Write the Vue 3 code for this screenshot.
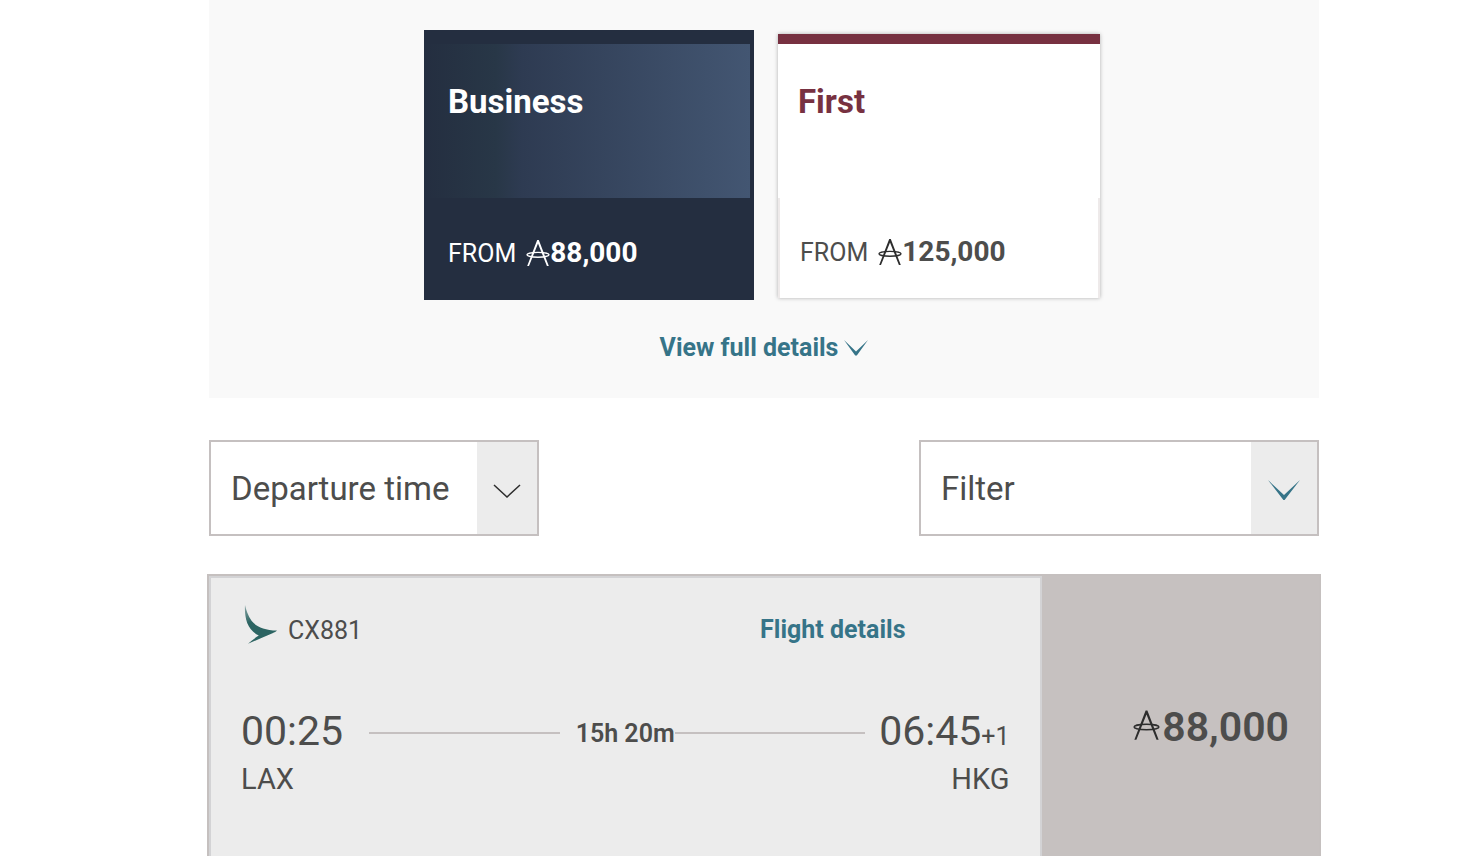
<script setup>
import { ref } from 'vue'

const cabin = ref('business')
const sort = ref('departure')

const cabins = [
  { id: 'business', name: 'Business', price: '88,000' },
  { id: 'first', name: 'First', price: '125,000' },
]
const flight = {
  number: 'CX881',
  departs: '00:25',
  origin: 'LAX',
  duration: '15h 20m',
  arrives: '06:45',
  dayOffset: '+1',
  destination: 'HKG',
  price: '88,000',
}
</script>

<template>
  <main class="page">
    <section class="fares">
      <div class="cards">
        <button
          v-for="c in cabins"
          :key="c.id"
          type="button"
          class="card"
          :class="c.id"
          :aria-pressed="cabin === c.id"
          @click="cabin = c.id"
        >
          <span class="card-head">{{ c.name }}</span>
          <span class="card-fare">
            <span class="from">FROM</span>
            <svg class="miles" viewBox="0 0 24 28" aria-hidden="true">
              <path class="legs" d="M1.2 27 L11.2 1 L12.8 1 L22.8 27 L20.9 27 L12 4.6 L3 27 Z" />
              <ellipse class="ring" cx="12" cy="15.8" rx="11" ry="2.4" />
            </svg>
            <strong class="amount">{{ c.price }}</strong>
          </span>
        </button>
      </div>
      <a href="#details" class="details">
        View full details
        <svg class="details-icon" viewBox="0 0 24 16" aria-hidden="true">
          <path d="M0 0 L12 11.6 L24 0 L12.8 15.6 L11.2 15.6 Z" />
        </svg>
      </a>
    </section>

    <section class="tools">
      <div class="sort">
        <select v-model="sort" class="sort-select" aria-label="Sort by">
          <option value="departure">Departure time</option>
          <option value="arrival">Arrival time</option>
        </select>
        <span class="sort-arrow">
          <svg viewBox="0 0 28 14" aria-hidden="true">
            <path d="M1 1 L14 13 L27 1" />
          </svg>
        </span>
      </div>
      <button type="button" class="filter">
        <span class="filter-label">Filter</span>
        <span class="filter-arrow">
          <svg viewBox="0 0 32 20" aria-hidden="true">
            <path d="M0 0 L16 15 L32 0 L16.6 20 L15.4 20 Z" />
          </svg>
        </span>
      </button>
    </section>

    <article class="flight">
      <div class="info">
        <header class="info-head">
          <span class="carrier">
            <svg class="wing" viewBox="0 0 34 40" aria-hidden="true">
              <defs>
                <linearGradient id="wing-fill" x1="0" y1="0" x2="0.35" y2="1">
                  <stop offset="0" stop-color="#2c6462" stop-opacity="0.5" />
                  <stop offset="0.45" stop-color="#2c6462" />
                </linearGradient>
              </defs>
              <path
                fill="url(#wing-fill)"
                d="M1 1 C2 6 4 11.5 7.7 17 C12 22.5 20 26.2 33 26.6 C32 27.7 30.5 28.5 28.5 29.2 C20 32.5 12 36.5 4 39.8 C7.5 36.5 11 34 14.8 31.6 C9.5 29 5.5 24.5 3.2 19 C1.2 13.5 .6 6.5 1 1 Z"
              />
            </svg>
            {{ flight.number }}
          </span>
          <a href="#flight" class="flight-link">Flight details</a>
        </header>
        <div class="route">
          <div class="stop">
            <span class="time">{{ flight.departs }}</span>
            <span class="airport">{{ flight.origin }}</span>
          </div>
          <div class="leg">
            <span class="line"></span>
            <span class="duration">{{ flight.duration }}</span>
            <span class="line"></span>
          </div>
          <div class="stop arrival">
            <span class="time">{{ flight.arrives }}<small class="offset">{{ flight.dayOffset }}</small></span>
            <span class="airport">{{ flight.destination }}</span>
          </div>
        </div>
      </div>
      <button type="button" class="price">
        <svg class="miles large" viewBox="0 0 24 28" aria-hidden="true">
          <path class="legs" d="M1.2 27 L11.2 1 L12.8 1 L22.8 27 L20.9 27 L12 4.6 L3 27 Z" />
          <ellipse class="ring" cx="12" cy="15.8" rx="11" ry="2.4" />
        </svg>
        <span>{{ flight.price }}</span>
      </button>
    </article>
  </main>
</template>

<style>
body {
  margin: 0;
  background: #fff;
}
</style>

<style scoped>
.page,
.page * {
  box-sizing: border-box;
}
.page {
  display: flex;
  flex-direction: column;
  min-height: 100vh;
  padding: 0 161px 0 209px;
  font-family: Roboto, Inter, "Liberation Sans", sans-serif;
  color: #4d4d4c;
}
button,
select {
  margin: 0;
  padding: 0;
  border: 0;
  border-radius: 0;
  font: inherit;
  color: inherit;
  background: none;
  text-align: left;
  cursor: pointer;
}
a {
  color: #367488;
  font-weight: 700;
  font-size: 25px;
  line-height: 32px;
  text-decoration: none;
}
svg {
  display: block;
  flex: none;
}
.fares {
  display: flex;
  flex-direction: column;
  align-items: center;
  padding: 30px 0 34px;
  background: #f9f9f9;
}
.cards {
  display: flex;
  gap: 20px;
}
.card {
  display: flex;
  flex-direction: column;
  width: 330px;
  height: 270px;
}
.card-head {
  height: 154px;
  padding-top: 38px;
  font-size: 33px;
  line-height: 40px;
  font-weight: 700;
}
.card-fare {
  display: flex;
  align-items: center;
  padding-top: 38px;
}
.business {
  padding: 14px 4px 0 0;
  background: #242e40;
  color: #fff;
}
.business .card-head {
  width: 100%;
  padding-left: 24px;
  background: linear-gradient(90deg, #242e40 0%, #283747 22%, #2e3b52 30%, #435672 100%);
}
.business .card-fare {
  padding-left: 24px;
}
.first {
  width: 322px;
  height: 264px;
  margin: 4px;
  border-top: 10px solid #773141;
  background: #fff;
  box-shadow: 0 0 4px rgba(0, 0, 0, 0.3);
}
.first .card-head {
  padding-left: 20px;
  color: #773141;
}
.first .card-fare {
  width: 100%;
  height: 100px;
  padding-left: 20px;
  padding-bottom: 30px;
  border: 2px solid #eeeaea;
  border-width: 0 2px;
}
.from {
  padding-top: 2px;
  font-size: 25px;
  line-height: 32px;
}
.miles {
  width: 24px;
  height: 28px;
  margin-left: 10px;
}
.amount {
  font-size: 28px;
  line-height: 32px;
  font-weight: 700;
}
.legs {
  fill: currentColor;
}
.ring {
  fill: none;
  stroke: currentColor;
  stroke-width: 1.4;
}
.first .miles,
.large {
  color: #2d2d2d;
}
.details {
  display: flex;
  align-items: center;
  gap: 6px;
  margin-top: 30px;
}
.details-icon {
  width: 24px;
  height: 16px;
  fill: #367488;
}
.tools {
  display: flex;
  justify-content: space-between;
  margin: 42px 0 38px;
}
.sort,
.filter {
  position: relative;
  display: flex;
  height: 96px;
  border: 2px solid #c5c0c0;
  background: #fff;
  font-size: 33px;
}
.sort {
  width: 330px;
}
.sort-select {
  appearance: none;
  width: 100%;
  padding: 0 60px 0 20px;
}
.sort-arrow,
.filter-arrow {
  display: flex;
  align-items: center;
  justify-content: center;
  height: 100%;
  padding-top: 6px;
  background: #ececec;
}
.sort-arrow {
  position: absolute;
  top: 0;
  right: 0;
  width: 60px;
  pointer-events: none;
}
.sort-arrow svg {
  width: 28px;
  height: 14px;
  fill: none;
  stroke: #2d2d2d;
  stroke-width: 1.5;
}
.filter {
  width: 400px;
  align-items: center;
  padding-left: 20px;
}
.filter-label {
  flex: 1;
}
.filter-arrow {
  width: 66px;
  padding-top: 4px;
}
.filter-arrow svg {
  width: 32px;
  height: 20px;
  fill: #367488;
}
.flight {
  display: grid;
  grid-template-columns: 3fr 1fr;
  flex: 1;
  min-height: 282px;
  margin: 0 -2px;
  border: 2px solid #c5c0bf;
  border-bottom: 0;
  background: #c6c1c0;
}
.info {
  padding: 32px 30px 0;
  border: 2px solid #d3d3d5;
  border-bottom: 0;
  background: #ececec;
}
.info-head {
  display: flex;
  align-items: center;
  justify-content: space-between;
  height: 40px;
  padding-right: 104px;
}
.carrier {
  display: flex;
  align-items: center;
  gap: 10px;
  padding-left: 3px;
  font-size: 25px;
}
.wing {
  width: 34px;
  height: 40px;
  margin-top: -12px;
}
.route {
  display: flex;
  margin-top: 56px;
}
.stop {
  display: flex;
  flex-direction: column;
}
.arrival {
  align-items: flex-end;
}
.time {
  height: 50px;
  font-size: 41px;
  line-height: 50px;
}
.airport {
  font-size: 29px;
  line-height: 46px;
}
.offset {
  font-size: 25px;
  line-height: 32px;
}
.leg {
  display: flex;
  flex: 1;
  align-items: center;
  height: 54px;
  margin: 0 14px 0 26px;
}
.line {
  flex: 1;
  height: 2px;
  background: #c5c0c0;
}
.duration {
  padding-left: 16px;
  font-size: 25px;
  font-weight: 600;
}
.price {
  display: flex;
  align-items: center;
  justify-content: flex-end;
  gap: 2px;
  height: 302px;
  padding-right: 30px;
  font-size: 41px;
  font-weight: 600;
}
.large {
  width: 27px;
  height: 32px;
  margin-top: -4px;
}
</style>
